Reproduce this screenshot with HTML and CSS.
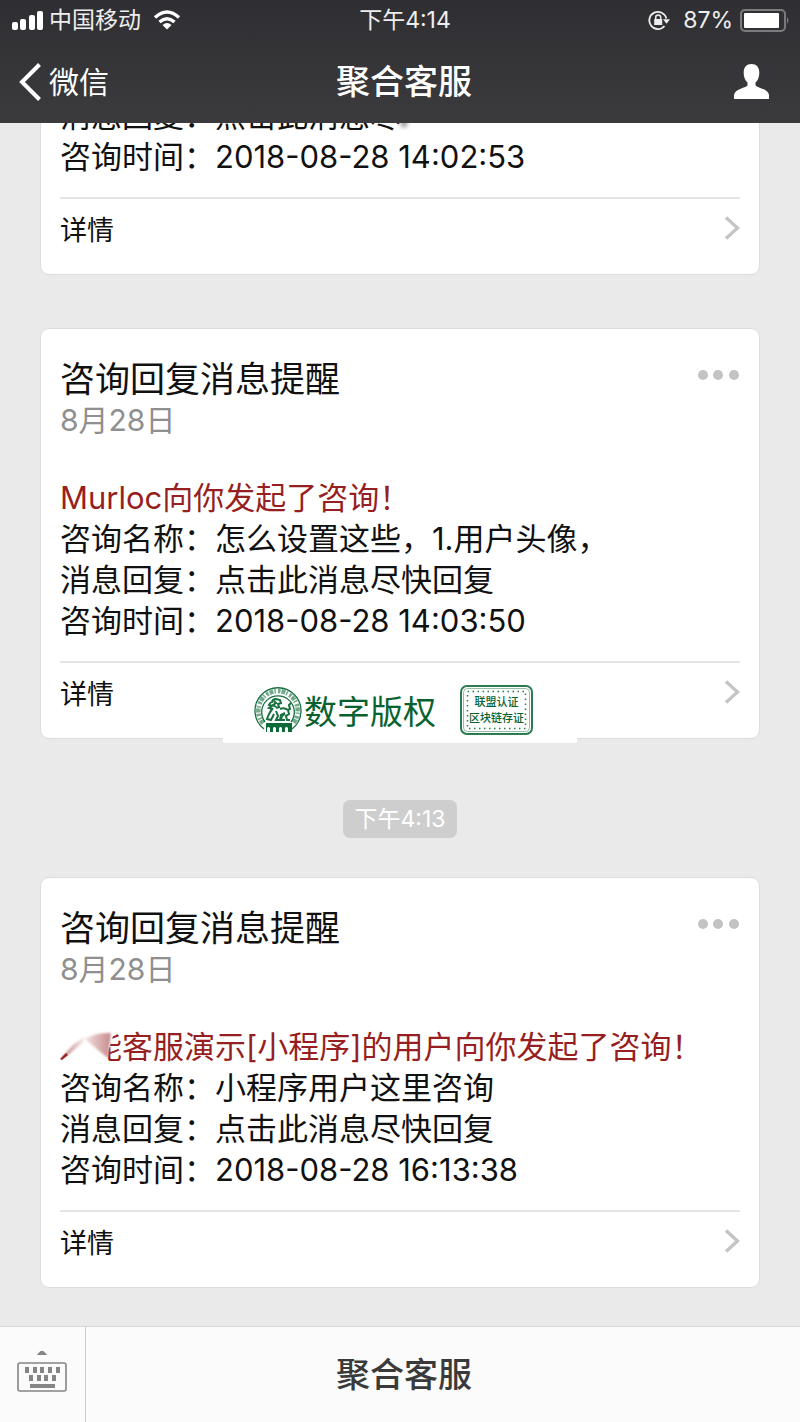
FILE: index.html
```html
<!DOCTYPE html>
<html lang="zh-CN">
<head>
<meta charset="utf-8">
<meta name="viewport" content="width=device-width, initial-scale=1">
<title>聚合客服</title>
<link rel="stylesheet" href="styles.css">
</head>
<body>
<div class="app">
  <header class="header">
    <div class="status">
      <div class="status-left">
        <svg width="32" height="20" viewBox="0 0 32 20" fill="#fff" aria-hidden="true"><rect x="0" y="12" width="6" height="8" rx="2"/><rect x="8" y="9" width="6" height="11" rx="2"/><rect x="17" y="5" width="6" height="15" rx="2"/><rect x="25" y="1" width="6" height="19" rx="2"/></svg>
        <span>中国移动</span>
        <svg class="wifi" width="28" height="20" viewBox="0 0 28 20" fill="none" stroke="#fff" stroke-width="3.4" aria-hidden="true"><path d="M2 7.500Q14-3.500 26 7.500"/><path d="M6.500 12Q14 5.500 21.500 12"/><path d="M9.500 15Q14 11 18.500 15L14 19.500Z" fill="#fff" stroke="none"/></svg>
      </div>
      <time class="clock">下午4:14</time>
      <div class="status-right">
        <svg width="22" height="21" viewBox="0 0 22 21" fill="none" stroke="#eee" stroke-width="1.800" aria-hidden="true"><path d="M18.300 8.500A8.600 8.600 0 1 0 16.500 16"/><path d="M15 9.300h7l-3.500 4.500z" fill="#eee" stroke="none"/><rect x="6.200" y="9" width="8" height="6" fill="#eee" stroke="none"/><path d="M7.700 9V7.500a2.500 2.500 0 0 1 5 0V9" stroke-width="1.500"/></svg>
        <span>87%</span>
        <svg width="50" height="23" viewBox="0 0 50 23" aria-hidden="true"><rect x="1" y="1" width="44" height="21" rx="4" fill="none" stroke="#7b7b7d" stroke-width="2"/><rect x="4" y="4" width="35" height="15" rx="1" fill="#fff"/><path d="M47 8q3 3.500 0 7z" fill="#7b7b7d"/></svg>
      </div>
    </div>
    <nav class="nav">
      <a class="back" href="#"><svg width="22" height="38" viewBox="0 0 22 38" fill="none" stroke="#fff" stroke-width="4" aria-hidden="true"><path d="M20.500 1.500L3 19l17.500 17.500"/></svg>微信</a>
      <h1 class="title">聚合客服</h1>
      <button class="profile" type="button" aria-label="资料"><svg width="35" height="35" viewBox="0 0 35 35" fill="#fff" aria-hidden="true"><path d="M17.500 0C22.500 0 25.500 3.500 25.300 9C25.200 13 24 16.500 21.500 18.500V21.500C24 24 34 25 35 31V35H0V31C1 25 11 24 13.500 21.500V18.500C11 16.500 9.800 13 9.700 9C9.500 3.500 12.500 0 17.500 0Z"/></svg></button>
    </nav>
  </header>

  <main class="chat">
    <article class="card card-cut">
      <p class="row">消息回复：点击此消息尽<span class="smudge"></span></p>
      <p class="row">咨询时间：2018-08-28 14:02:53</p>
      <a class="detail" href="#">详情<svg class="chevron" width="16" height="24" viewBox="0 0 16 24" aria-hidden="true"><path d="M2 1.500L13.500 12 2 22.500"/></svg></a>
    </article>

    <article class="card">
      <div class="card-head">
        <h2 class="card-title">咨询回复消息提醒</h2>
        <button class="more" type="button" aria-label="更多"><svg width="42" height="10" viewBox="0 0 42 10" fill="#c3c3c4" aria-hidden="true"><circle cx="5" cy="5" r="5"/><circle cx="20" cy="5" r="5"/><circle cx="36" cy="5" r="5"/></svg></button>
      </div>
      <p class="date">8月28日</p>
      <p class="row alert">Murloc向你发起了咨询！</p>
      <p class="row">咨询名称：怎么设置这些，1.用户头像，</p>
      <p class="row">消息回复：点击此消息尽快回复</p>
      <p class="row">咨询时间：2018-08-28 14:03:50</p>
      <a class="detail" href="#">详情<svg class="chevron" width="16" height="24" viewBox="0 0 16 24" aria-hidden="true"><path d="M2 1.500L13.500 12 2 22.500"/></svg></a>
      <div class="mark">
        <svg width="48" height="48" viewBox="0 0 48 48" fill="none" stroke="#17703f" aria-hidden="true">
          <path d="M10 43A23 23 0 1 1 38 43" stroke-width="1.300"/>
          <path d="M9 37.500A19.700 19.700 0 1 1 39 37.500" stroke-width="4.500" stroke-dasharray="4 1 1.500 2 2.500 1" opacity=".6"/>
          <path d="M11 36A16.300 16.300 0 1 1 37 36" stroke-width="1.300"/>
          <path d="M18 17q0-4 4-4l4 1 1 3-3 1 1 3-3 1M17 16l-2 3 3 1-3 2 3 1-2 3M19 22l-4 6-2 5 4 1 3-6M22 25l2 5-2 4h4l1-5 4-2M26 23q4-2 8 1l2-1-1-4 2-2M34 24l1 4-3 2 1 4h3M31 28l-3 2-1 4h4M20 15l2 2-3 2 3 2" stroke-width="2"/>
          <path d="M12 37h26v9h-4v-4q-1.500-2-3 0v4h-3v-4q-1.500-2-3 0v4h-3v-4q-1.500-2-3 0v4h-3v-4q-1.500-2-3 0v4h-1z" fill="#0b6a38" stroke="none"/>
        </svg>
        <span class="mark-text">数字版权</span>
        <span class="stamp">
          <svg class="stamp-frame" width="73" height="50" viewBox="0 0 73 50" fill="none" stroke="#2b7c51" aria-hidden="true"><rect x="1" y="1" width="71" height="48" rx="6" stroke-width="2"/><rect x="3.500" y="3.500" width="66" height="43" rx="4" stroke-opacity=".5"/><rect x="7.500" y="6.500" width="58" height="37" stroke-width="1.500" stroke-dasharray="1.500 3.500"/></svg>
          <span>联盟认证</span><span>区块链存证</span>
        </span>
      </div>
    </article>

    <time class="pill">下午4:13</time>

    <article class="card">
      <div class="card-head">
        <h2 class="card-title">咨询回复消息提醒</h2>
        <button class="more" type="button" aria-label="更多"><svg width="42" height="10" viewBox="0 0 42 10" fill="#c3c3c4" aria-hidden="true"><circle cx="5" cy="5" r="5"/><circle cx="20" cy="5" r="5"/><circle cx="36" cy="5" r="5"/></svg></button>
      </div>
      <p class="date">8月28日</p>
      <p class="row alert masked">能客服演示[小程序]的用户向你发起了咨询！<svg class="smear" width="54" height="36" viewBox="0 0 54 36" aria-hidden="true"><defs><linearGradient id="s" x1="0" x2="1"><stop offset="0" stop-color="#f3e2e2"/><stop offset="1" stop-color="#c68a8b"/></linearGradient><linearGradient id="t" x1="0" x2="1"><stop offset="0" stop-color="#95262a"/><stop offset="1" stop-color="#f6e8e8"/></linearGradient><filter id="b"><feGaussianBlur stdDeviation="1"/></filter></defs><path d="M28 0H54V5L46 30 50 36H28Z" fill="#fff"/><path d="M1 30L14 16 26 8 22 15 7 28Z" fill="url(#t)" filter="url(#b)" opacity=".6"/><path d="M0 31L6 25 8 27 2 32Z" fill="#95262a"/><path d="M25 11Q36 4 51 5L48 30Q40 24 25 11Z" fill="url(#s)" filter="url(#b)"/></svg></p>
      <p class="row">咨询名称：小程序用户这里咨询</p>
      <p class="row">消息回复：点击此消息尽快回复</p>
      <p class="row">咨询时间：2018-08-28 16:13:38</p>
      <a class="detail" href="#">详情<svg class="chevron" width="16" height="24" viewBox="0 0 16 24" aria-hidden="true"><path d="M2 1.500L13.500 12 2 22.500"/></svg></a>
    </article>
  </main>

  <footer class="footer">
    <button class="keyboard" type="button" aria-label="键盘"><svg width="50" height="42" viewBox="0 0 50 42" fill="#858585" aria-hidden="true"><path d="M20 5Q21 3 23 1.500Q25 0 27 1.500Q29 3 30 5z"/><rect x="1" y="13" width="48" height="28" rx="2" fill="none" stroke="#858585" stroke-width="1.600"/><path d="M8 17h4v6H8zM16 17h4v6h-4zM23 17h4v6h-4zM31 17h4v6h-4zM39 17h4v6h-4zM12 25h4v6h-4zM20 25h4v6h-4zM27 25h4v6h-4zM35 25h4v6h-4zM13 34h25v4H13z"/></svg></button>
    <button class="menu" type="button">聚合客服</button>
  </footer>
</div>
</body>
</html>
```
FILE: styles.css
```css
* { box-sizing: border-box; }
body {
  margin: 0;
  font-family: Inter, "Noto Sans CJK SC", sans-serif;
  color: #111;
}
h1, h2, p { margin: 0; font-weight: 400; }
a { color: inherit; text-decoration: none; }
button { border: 0; padding: 0; background: none; font: inherit; color: inherit; }
svg { display: block; flex: none; }

.app {
  height: 100vh;
  display: flex;
  flex-direction: column;
  background: #eaeaea;
}

.header {
  flex: none;
  color: #fff;
  background: linear-gradient(#2f2e32, #3b3a3d);
}
.status {
  height: 40px;
  padding: 0 10px 0 12px;
  display: grid;
  grid-template-columns: 1fr auto 1fr;
  align-items: center;
  font-size: 23px;
  line-height: 36px;
  color: #eee;
}
.status-left, .status-right { display: flex; align-items: center; gap: 5px; }
.wifi { margin-left: 7px; }
.status-right { justify-content: flex-end; gap: 7px; }
.status-right span { margin-left: 6px; }
.clock { padding-left: 8px; }
.nav {
  height: 83px;
  padding: 0 31px 0 19px;
  display: grid;
  grid-template-columns: 1fr auto 1fr;
  align-items: center;
}
.back { display: flex; align-items: center; gap: 8px; font-size: 30px; line-height: 40px; }
.title { padding-left: 20px; font-size: 34px; line-height: 48px; font-weight: 500; }
.profile { justify-self: end; }

.chat {
  flex: 1;
  min-height: 0;
  overflow: hidden;
  padding: 0 40px 38px;
  display: flex;
  flex-direction: column;
  justify-content: flex-end;
}
.card {
  flex: none;
  position: relative;
  padding: 28px 19px 15px;
  border: 1px solid #dcdcdc;
  border-radius: 9px;
  background: #fff;
}
.card-cut { padding-top: 0; margin-bottom: 53px; }
.card-head { display: flex; justify-content: space-between; height: 44px; }
.card-title { font-size: 35px; line-height: 44px; }
.more { align-self: center; margin-bottom: 8px; }
.date { margin-bottom: 38px; font-size: 30px; line-height: 38px; color: #8f8f8f; }
.row { font-size: 31px; line-height: 41px; white-space: nowrap; }
.alert { color: #971f21; }
.detail {
  margin-top: 20px;
  height: 62px;
  padding-bottom: 2px;
  border-top: 2px solid #e4e4e4;
  display: flex;
  justify-content: space-between;
  align-items: center;
  font-size: 27px;
}
.chevron { fill: none; stroke: #c5c5c7; stroke-width: 3.5; }
.smudge {
  display: inline-block;
  width: 6px;
  height: 8px;
  background: #999;
  filter: blur(2px);
}
.masked { position: relative; padding-left: 31px; }
.smear { position: absolute; left: 0; top: 2px; }

.mark {
  position: absolute;
  left: 50%;
  bottom: -5px;
  transform: translateX(-50%);
  width: 354px;
  height: 64px;
  padding: 0 44px 2px 31px;
  display: flex;
  align-items: center;
  background: #fff;
  color: #08622f;
}
.mark-text { margin-left: 2px; font-size: 33px; }
.stamp {
  position: relative;
  margin-left: auto;
  width: 73px;
  height: 50px;
  display: flex;
  flex-direction: column;
  align-items: center;
  justify-content: center;
  font-size: 11px;
  font-weight: 500;
  line-height: 16px;
  white-space: nowrap;
}
.stamp-frame { position: absolute; inset: 0; }

.pill {
  flex: none;
  align-self: center;
  margin: 61px 0 39px;
  padding: 0 11px;
  height: 38px;
  line-height: 38px;
  border-radius: 7px;
  background: #cecece;
  color: #fff;
  font-size: 23px;
}

.footer {
  flex: none;
  height: 96px;
  display: flex;
  border-top: 1px solid #d6d6d6;
  background: #fbfbfb;
}
.keyboard {
  width: 86px;
  padding: 0 0 8px 17px;
  border-right: 1px solid #cfcfcf;
}
.menu {
  flex: 1;
  padding: 0 78px 4px 0;
  font-size: 34px;
  font-weight: 500;
  color: #3a3a3a;
}
```
